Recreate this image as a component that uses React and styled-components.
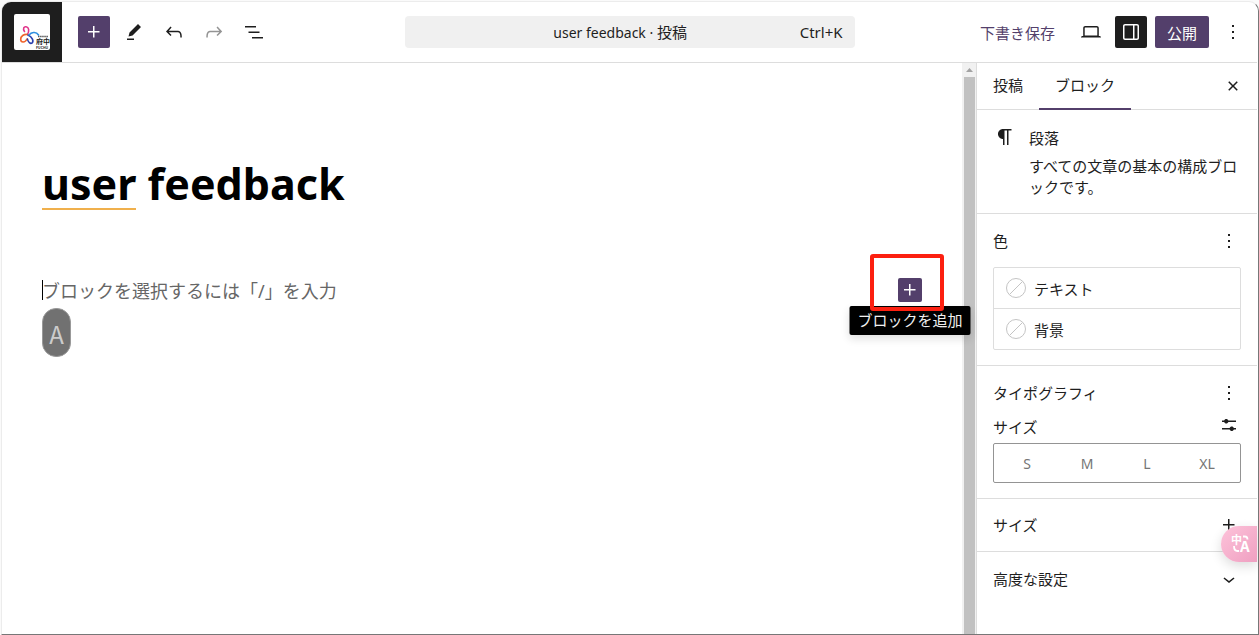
import React from 'react';
import styled, { createGlobalStyle, css } from 'styled-components';

const accent = '#533f6b';
const ink = '#1e1e1e';
const line = '#dddddd';

const GlobalStyle = createGlobalStyle`
  *, *::before, *::after { box-sizing: border-box; }
  body {
    margin: 0;
    background: #fafafa;
    color: ${ink};
    font-family: "Noto Sans", "Noto Sans CJK JP", sans-serif;
    font-size: 15px;
    line-height: 24px;
  }
  button, input {
    font: inherit;
    color: inherit;
    border: 0;
    padding: 0;
    margin: 0;
    background: none;
  }
  h1, h2, p { margin: 0; font-size: inherit; font-weight: 400; }
`;

const Page = styled.div`
  display: flex;
  min-height: 100vh;
  padding: 1px 0 0 1px;
`;

const Frame = styled.div`
  position: relative;
  flex: 1;
  display: flex;
  flex-direction: column;
  min-width: 0;
  overflow: hidden;
  padding-right: 1px;
  background: #fff;
  border: 1px solid #ececec;
  border-right-color: #777;
  border-bottom-color: #777;
  border-radius: 10px 10px 0 0;
`;

const Header = styled.header`
  display: grid;
  grid-template-columns: 1fr minmax(0, 450px) 1fr;
  align-items: center;
  height: 61px;
  border-bottom: 1px solid ${line};
`;

const Tools = styled.div`
  display: flex;
  align-items: center;
  gap: 8px;
  ${p => p.$end && css`justify-content: flex-end; padding-right: 8px;`}
`;

const SiteLink = styled.a`
  display: grid;
  place-items: center;
  width: 60px;
  height: 60px;
  margin-right: 8px;
  background: ${ink};
`;

const Logo = styled.svg`
  width: 36px;
  height: 36px;
  border-radius: 2px;
  background: #fff;
`;

const IconButton = styled.button`
  display: grid;
  place-items: center;
  flex: none;
  width: ${p => p.$size || 32}px;
  height: ${p => p.$size || 32}px;
  border-radius: 2px;
  color: ${p => (p.$fill ? '#fff' : p.disabled ? '#949494' : ink)};
  background: ${p => p.$fill || 'transparent'};
`;

const TextButton = styled.button`
  height: 32px;
  padding: 2px 12px 0;
  border-radius: 2px;
  white-space: nowrap;
  color: ${p => (p.$primary ? '#fff' : accent)};
  background: ${p => (p.$primary ? accent : 'transparent')};
`;

const CommandBar = styled.button`
  display: grid;
  grid-template-columns: 1fr auto;
  align-items: center;
  height: 32px;
  padding: 0 12px 0 36px;
  border-radius: 4px;
  background: #f0f0f0;
`;

const CommandTitle = styled.span`
  font-size: 14px;
  small { font-size: 15px; }
`;

const Body = styled.div`
  flex: 1;
  display: flex;
  min-height: 0;
`;

const Canvas = styled.main`
  flex: 1;
  min-width: 0;
  padding: 87px 40px 0;
`;

const Title = styled.h1`
  color: #000;
  font-size: 43px;
  font-weight: 700;
  line-height: 68px;
`;

const Misspelled = styled.span`
  display: inline-block;
  height: 60px;
  border-bottom: 2px solid #f0b04c;
`;

const BlockRow = styled.div`
  display: flex;
  align-items: center;
  height: 32px;
  margin-top: 56px;
`;

const Caret = styled.span`
  width: 1px;
  height: 20px;
  margin-right: -1px;
  background: #000;
`;

const ParagraphInput = styled.input`
  flex: 1;
  min-width: 0;
  height: 30px;
  padding-top: 2px;
  font-size: 18px;
  outline: 0;
  &::placeholder { color: #666; opacity: 1; }
`;

const Inserter = styled.div`
  position: relative;
`;

const Tooltip = styled.span`
  position: absolute;
  top: 28px;
  left: 50%;
  transform: translateX(-50%);
  padding: 2px 8px 3px;
  border-radius: 2px;
  background: #000;
  color: #f0f0f0;
  white-space: nowrap;
  box-shadow: 0 4px 8px rgba(0, 0, 0, 0.12);
`;

const Highlight = styled.span`
  position: absolute;
  top: -24px;
  left: -28px;
  width: 74px;
  height: 57px;
  border: 4px solid #fc2010;
  border-radius: 3px;
  pointer-events: none;
`;

const InputMode = styled.div`
  display: grid;
  place-items: center;
  width: 29px;
  height: 49px;
  margin-top: 2px;
  padding-top: 2px;
  border: 1px solid #999;
  border-radius: 14px;
  background: #717171;
  color: #ccc;
  font: 24px/32px "Noto Sans CJK JP", sans-serif;
`;

const Scrollbar = styled.div`
  display: flex;
  flex-direction: column;
  align-items: center;
  width: 14px;
  padding: 0 1px 0 2px;
  background: #f1f1f1;
  svg { flex: none; }
`;

const Thumb = styled.div`
  flex: 1;
  width: 11px;
  background: #c1c1c1;
`;

const Sidebar = styled.aside`
  flex: none;
  width: 281px;
  border-left: 1px solid ${line};
`;

const Tabs = styled.div`
  display: flex;
  align-items: center;
  height: 47px;
  padding-right: 8px;
  border-bottom: 1px solid ${line};
`;

const Tab = styled.button`
  height: 47px;
  padding: 0 16px;
  border-bottom: 2px solid ${p => (p.$active ? accent : 'transparent')};
`;

const Spacer = styled.span`
  flex: 1;
`;

const BlockCard = styled.section`
  display: flex;
  gap: 12px;
  padding: 15px 16px;
  height: 103px;
  svg { flex: none; }
`;

const CardText = styled.div`
  padding-top: 1px;
  p { padding-top: 6px; line-height: 21px; }
`;

const Panel = styled.section`
  border-top: 1px solid ${line};
  padding: ${p => p.$pad || 15}px 16px;
`;

const PanelHeader = styled.div`
  display: flex;
  align-items: center;
  justify-content: space-between;
  height: 24px;
  margin-bottom: ${p => p.$gap || 0}px;
`;

const FieldLabel = styled.span`
  padding-top: 3px;
`;

const ColorList = styled.div`
  border: 1px solid ${line};
  border-radius: 2px;
`;

const ColorRow = styled.button`
  display: flex;
  align-items: center;
  gap: 8px;
  width: 100%;
  height: 40px;
  padding: 0 12px;
  & + & { height: 41px; border-top: 1px solid ${line}; }
  span { padding-top: 2px; }
`;

const SizeGroup = styled.div`
  display: flex;
  height: 40px;
  padding: 3px;
  border: 1px solid #949494;
  border-radius: 2px;
`;

const SizeButton = styled.button`
  flex: 1;
  padding-top: 2px;
  color: #757575;
  font-size: 14px;
`;

const TranslateButton = styled.button`
  position: absolute;
  right: 1px;
  bottom: 72px;
  display: grid;
  place-items: center;
  width: 36px;
  height: 36px;
  padding-left: 4px;
  border-radius: 18px 0 0 18px;
  background: linear-gradient(135deg, #fdc3da, #ef9fc1);
  box-shadow: 0 4px 12px rgba(0, 0, 0, 0.14);
  svg {
    overflow: visible;
    font-family: "Noto Sans CJK JP", sans-serif;
    font-weight: 700;
  }
`;

const icons = {
  plus: 'M11 12.5V17.5H12.5V12.5H17.5V11H12.5V6H11V11H6V12.5H11Z',
  edit: 'm19 7-3-3-8.5 8.5-1 4 4-1L19 7Zm-7 11.5H5V20h7v-1.5Z',
  undo: 'M18.3 11.7c-.6-.6-1.4-.9-2.3-.9H6.7l2.9-3.3-1.1-1-4.5 5L8.5 16l1-1-2.7-2.7H16c.5 0 .9.2 1.3.5 1 1 1 3.4 1 4.5v.3h1.5v-.2c0-1.5 0-4.3-1.5-5.7z',
  redo: 'M15.6 6.5l-1.1 1 2.9 3.3H8c-.9 0-1.7.3-2.3.9-1.4 1.5-1.4 4.2-1.4 5.6v.2h1.5v-.3c0-1.1 0-3.5 1-4.5.3-.3.7-.5 1.3-.5h9.2L14.5 15l1.1 1.1 4.6-4.6-4.6-5z',
  list: 'M3 6h11v1.5H3V6Zm3.5 5.5h11V13h-11v-1.5ZM21 17H10v1.5h11V17Z',
  desktop: 'M20.5 16h-.7V8c0-1.1-.9-2-2-2H6.2c-1.1 0-2 .9-2 2v8h-.7c-.8 0-1.5.7-1.5 1.5h20c0-.8-.7-1.5-1.5-1.5zM5.7 8c0-.3.2-.5.5-.5h11.6c.3 0 .5.2.5.5v7.6H5.7V8z',
  drawer: 'M18 4H6c-1.1 0-2 .9-2 2v12c0 1.1.9 2 2 2h12c1.1 0 2-.9 2-2V6c0-1.1-.9-2-2-2zm-4 14.5H6c-.3 0-.5-.2-.5-.5V6c0-.3.2-.5.5-.5h8v13zm4.5-.5c0 .3-.2.5-.5.5h-2.5v-13H18c.3 0 .5.2.5.5v12z',
  more: 'M13 19h-2v-2h2v2zm0-6h-2v-2h2v2zm0-6h-2V5h2v2z',
  close: 'M12 13.06l3.712 3.713 1.061-1.06L13.061 12l3.712-3.712-1.06-1.06L12 10.938 8.288 7.227l-1.061 1.06L10.939 12l-3.712 3.712 1.06 1.061L12 13.061z',
  paragraph: 'm9.99609 14v-.2251l.00391.0001v6.225h1.5v-14.5h2.5v14.5h1.5v-14.5h3v-1.5h-8.50391c-2.76142 0-5 2.23858-5 5 0 2.7614 2.23858 5 5 5z',
  settings: 'm19 7.5h-7.628c-.3089-.87389-1.1423-1.5-2.122-1.5-.97966 0-1.81309.62611-2.12197 1.5h-2.12803v1.5h2.12803c.30888.87389 1.14231 1.5 2.12197 1.5.9797 0 1.8131-.62611 2.122-1.5h7.628zM19 15h-2.128c-.3089-.8739-1.1423-1.5-2.122-1.5s-1.8131.6261-2.122 1.5h-7.628v1.5h7.628c.3089.8739 1.1423 1.5 2.122 1.5s1.8131-.6261 2.122-1.5h2.128z',
  chevron: 'M17.5 11.6L12 16l-5.5-4.4.9-1.2L12 14l4.5-3.6 1 1.2z',
};

const Icon = ({ name }) => (
  <svg width="24" height="24" viewBox="0 0 24 24" fill="currentColor" aria-hidden="true">
    <path fillRule={name === 'drawer' ? 'evenodd' : 'nonzero'} d={icons[name]} />
  </svg>
);

const SiteLogo = () => (
  <Logo viewBox="0 0 36 36" aria-hidden="true">
    <g fill="none" strokeWidth="1.6" strokeLinecap="round">
      <path stroke="#e0338a" d="M10.500 17.500C8.500 14.500 10 12.500 12 12.800c3 .5 3.500 3.700 1.500 7.700" />
      <path stroke="#f0642d" d="M13.500 20.500c-3.500-.5-7 1.500-6.800 5 .2 3.500 4.300 3.500 6.300-.5" />
      <path stroke="#2b3fae" d="M13.500 25c.5 3.500 3 5 4.500 4 2-1.500.5-6-4-8" />
      <path stroke="#2f8fe0" d="M15 21c2-2.500 7-4 9.500 0" />
    </g>
    <g fill="#222" fontFamily="Noto Sans CJK JP, sans-serif" fontWeight="700">
      <text x="22" y="29.500" fontSize="7">府中</text>
      <text x="22" y="35" fontSize="3.500">FUCHU</text>
    </g>
    <path d="M24 22.500h10" stroke="#555" strokeWidth="1.500" strokeDasharray="1.500 .6" />
  </Logo>
);

const EmptySwatch = () => (
  <svg width="20" height="20" viewBox="0 0 20 20" fill="none" stroke="#c4c4c4" aria-hidden="true">
    <circle cx="10" cy="10" r="9.500" />
    <path d="M3.500 16.500l13-13" />
  </svg>
);

export default function App() {
  return (
    <Page>
      <GlobalStyle />
      <Frame>
        <Header>
          <Tools>
            <SiteLink href="#" aria-label="サイト"><SiteLogo /></SiteLink>
            <IconButton $fill={accent} aria-label="追加"><Icon name="plus" /></IconButton>
            <IconButton aria-label="ツール"><Icon name="edit" /></IconButton>
            <IconButton aria-label="元に戻す"><Icon name="undo" /></IconButton>
            <IconButton disabled aria-label="やり直す"><Icon name="redo" /></IconButton>
            <IconButton aria-label="リスト表示"><Icon name="list" /></IconButton>
          </Tools>
          <CommandBar>
            <CommandTitle>user feedback · <small>投稿</small></CommandTitle>
            <span>Ctrl+K</span>
          </CommandBar>
          <Tools $end>
            <TextButton>下書き保存</TextButton>
            <IconButton aria-label="表示"><Icon name="desktop" /></IconButton>
            <IconButton $fill={ink} aria-label="設定"><Icon name="drawer" /></IconButton>
            <TextButton $primary>公開</TextButton>
            <IconButton aria-label="オプション"><Icon name="more" /></IconButton>
          </Tools>
        </Header>
        <Body>
          <Canvas>
            <Title><Misspelled>user</Misspelled> feedback</Title>
            <BlockRow>
              <Caret />
              <ParagraphInput aria-label="段落" placeholder="ブロックを選択するには「/」を入力" />
              <Inserter>
                <IconButton $size={24} $fill={accent} aria-label="ブロックを追加"><Icon name="plus" /></IconButton>
                <Tooltip role="tooltip">ブロックを追加</Tooltip>
                <Highlight />
              </Inserter>
            </BlockRow>
            <InputMode>A</InputMode>
          </Canvas>
          <Scrollbar>
            <svg width="11" height="14" viewBox="0 0 11 14" aria-hidden="true"><path d="M2 9l3.500-4L9 9z" fill="#a3a3a3" /></svg>
            <Thumb />
          </Scrollbar>
          <Sidebar>
            <Tabs>
              <Tab>投稿</Tab>
              <Tab $active>ブロック</Tab>
              <Spacer />
              <IconButton aria-label="閉じる"><Icon name="close" /></IconButton>
            </Tabs>
            <BlockCard>
              <Icon name="paragraph" />
              <CardText>
                <h2>段落</h2>
                <p>すべての文章の基本の構成ブロックです。</p>
              </CardText>
            </BlockCard>
            <Panel>
              <PanelHeader $gap={14}>
                <h2>色</h2>
                <IconButton $size={24} aria-label="色オプション"><Icon name="more" /></IconButton>
              </PanelHeader>
              <ColorList>
                <ColorRow><EmptySwatch /><span>テキスト</span></ColorRow>
                <ColorRow><EmptySwatch /><span>背景</span></ColorRow>
              </ColorList>
            </Panel>
            <Panel>
              <PanelHeader $gap={8}>
                <h2>タイポグラフィ</h2>
                <IconButton $size={24} aria-label="タイポグラフィオプション"><Icon name="more" /></IconButton>
              </PanelHeader>
              <PanelHeader $gap={6}>
                <FieldLabel>サイズ</FieldLabel>
                <IconButton $size={24} aria-label="カスタムサイズ"><Icon name="settings" /></IconButton>
              </PanelHeader>
              <SizeGroup>
                {['S', 'M', 'L', 'XL'].map(s => <SizeButton key={s}>{s}</SizeButton>)}
              </SizeGroup>
            </Panel>
            <Panel $pad={14}>
              <PanelHeader>
                <h2>サイズ</h2>
                <IconButton $size={24} aria-label="サイズオプション"><Icon name="plus" /></IconButton>
              </PanelHeader>
            </Panel>
            <Panel>
              <PanelHeader>
                <h2>高度な設定</h2>
                <IconButton $size={24} aria-label="開く"><Icon name="chevron" /></IconButton>
              </PanelHeader>
            </Panel>
          </Sidebar>
        </Body>
        <TranslateButton aria-label="翻訳">
          <svg width="20" height="20" viewBox="0 0 20 20" fill="#fff" aria-hidden="true">
            <text x="0" y="10" fontSize="11">中</text>
            <text x="9" y="18" fontSize="15">A</text>
            <path d="M12 2.500h2q2.500 0 2.500 3M3 12q0 5 3.500 5H8" fill="none" stroke="#fff" strokeWidth="1.800" />
          </svg>
        </TranslateButton>
      </Frame>
    </Page>
  );
}
